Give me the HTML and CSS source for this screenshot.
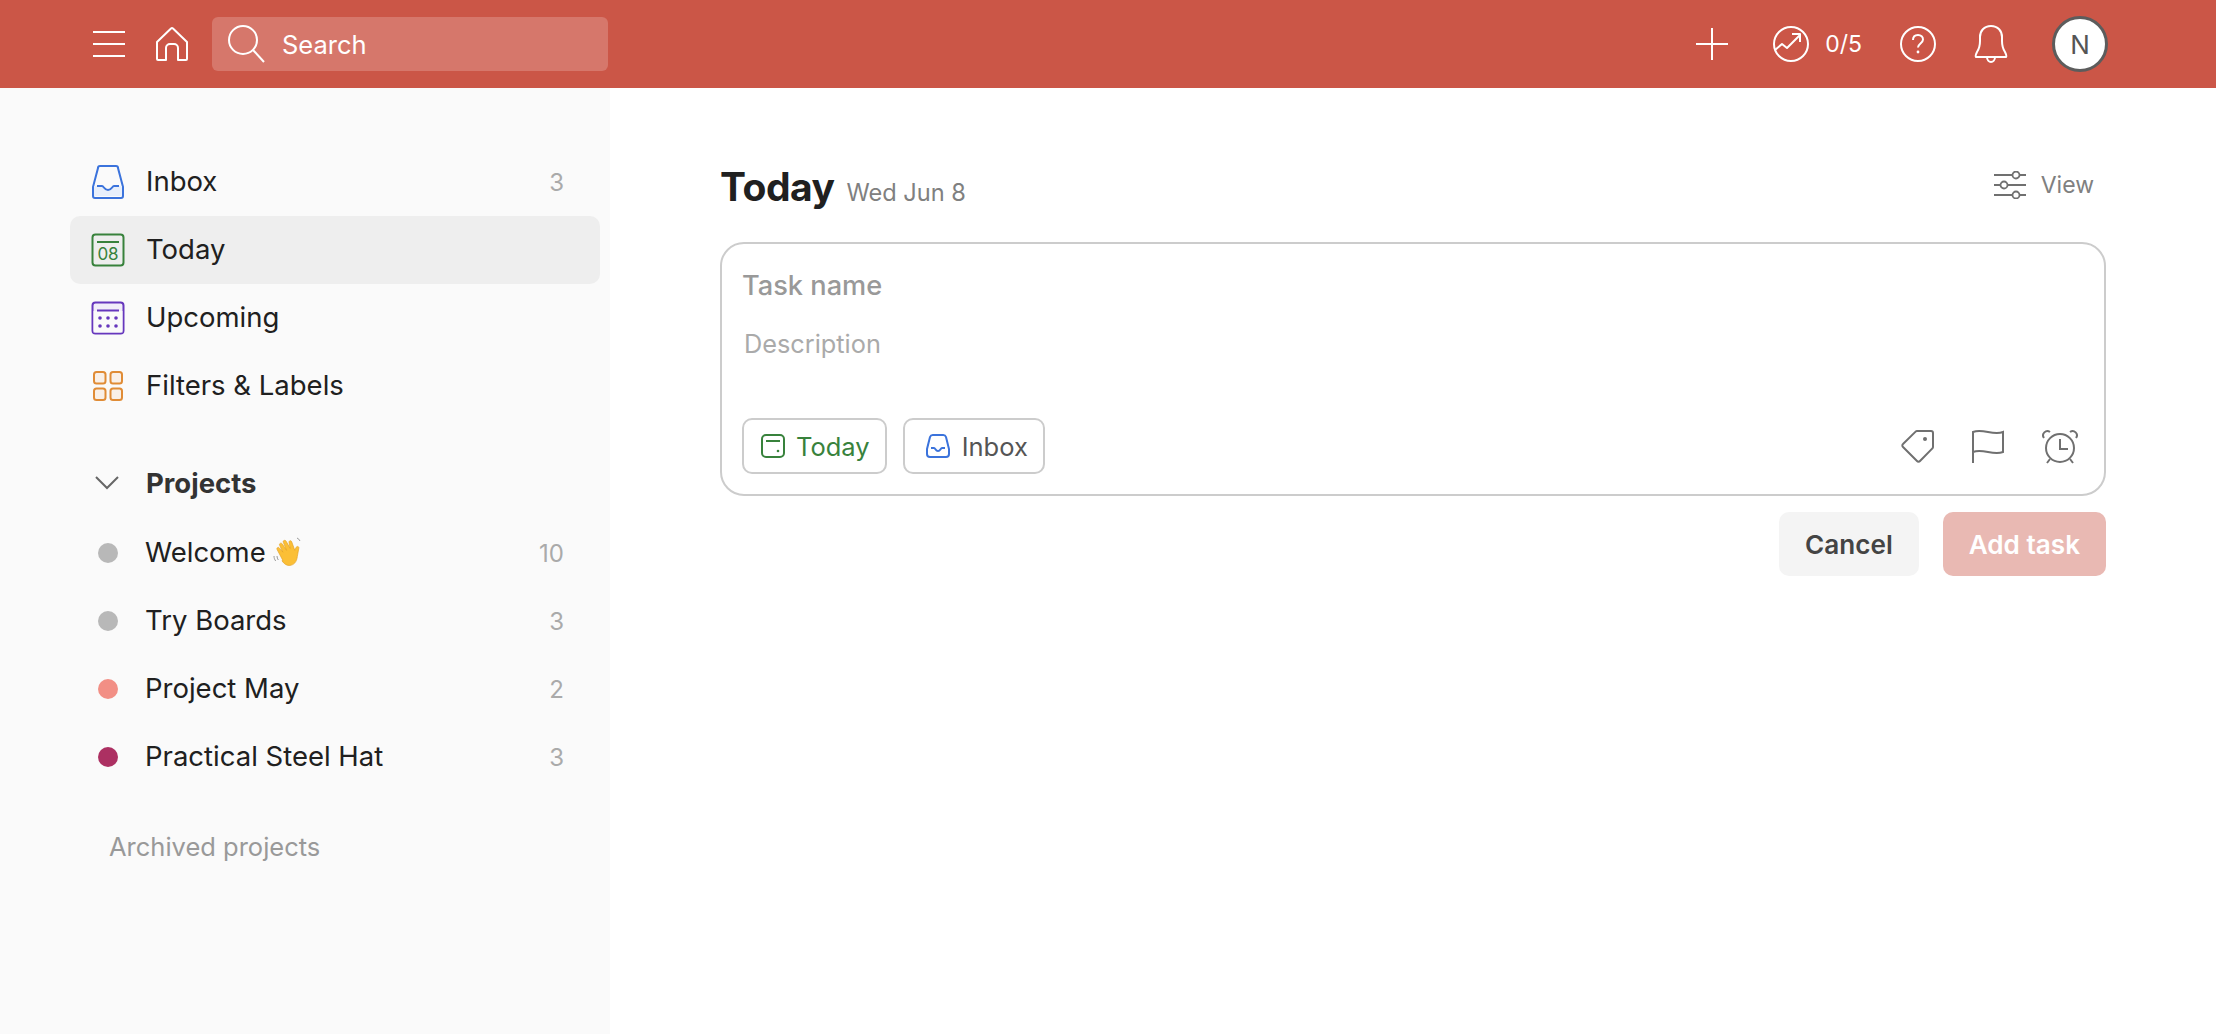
FILE: index.html
```html
<!DOCTYPE html>
<html lang="en">
<head>
  <meta charset="UTF-8">
  <title>Today: Todoist</title>
  <link rel="stylesheet" href="styles.css">
</head>
<body>
  <header class="topbar">
    <div class="topbar-left">
      <svg class="icon-menu" width="34" height="28" viewBox="0 0 34 28" fill="none" stroke="#fff" stroke-width="2"><path d="M1 2h32M1 14h32M1 26h32"/></svg>
      <svg class="icon-home" width="32" height="34" viewBox="0 0 32 34" fill="none" stroke="#fff" stroke-width="2" stroke-linejoin="round"><path d="M1 15 15 1.500a1.500 1.500 0 0 1 2 0L31 15v17a1 1 0 0 1-1 1h-8V21a4 4 0 0 0-4-4h-4a4 4 0 0 0-4 4v12H2a1 1 0 0 1-1-1z"/></svg>
      <div class="search">
        <svg width="38" height="38" viewBox="0 0 38 38" fill="none" stroke="#fff" stroke-width="2"><circle cx="16" cy="15" r="14"/><path d="m26 25 11 12"/></svg>
        <span>Search</span>
      </div>
    </div>
    <div class="topbar-right">
      <svg class="top-plus" width="32" height="32" viewBox="0 0 32 32" fill="none" stroke="#fff" stroke-width="2"><path d="M16 0v32M0 16h32"/></svg>
      <div class="karma">
        <svg width="36" height="36" viewBox="0 0 36 36" fill="none" stroke="#fff" stroke-width="2" stroke-linejoin="round"><circle cx="18" cy="18" r="17"/><path d="m2 24 7-6 5 4 13-13M19 8h8v8"/></svg>
        <span>0/5</span>
      </div>
      <svg class="top-help" width="36" height="36" viewBox="0 0 36 36" fill="none" stroke="#fff" stroke-width="2"><circle cx="18" cy="18" r="17"/><path d="M13 14c0-3 2-5 5-5s5 2 5 4.500c0 4-5 4-5 8"/><circle cx="18" cy="26" r="1.400" fill="#fff" stroke="none"/></svg>
      <svg class="top-bell" width="34" height="38" viewBox="0 0 34 38" fill="none" stroke="#fff" stroke-width="2" stroke-linejoin="round"><path d="M2 32c-1-1 0-3 1-5 2-3 3-5 3-11V12C6 6 10 1 17 1s11 5 11 11v4c0 6 1 8 3 11 1 2 2 4 1 5zM13 32c0 3 2 5 4 5s4-2 4-5"/></svg>
      <div class="avatar">N</div>
    </div>
  </header>

  <div class="layout">
    <aside class="sidebar">
      <nav class="nav">
        <a class="nav-item">
          <svg class="nav-icon" width="34" height="34" viewBox="0 0 34 34" fill="none"><path d="M2 22 7 3a2 2 0 0 1 2-2h16a2 2 0 0 1 2 2l5 19v9a2 2 0 0 1-2 2H4a2 2 0 0 1-2-2z" stroke="#3b73dc" stroke-width="2"/><path d="M3 21h8c2 0 2 4 6 4s4-4 6-4h8v10H3z" fill="#e8effb"/><path d="M6 21h5c2 0 2 4 6 4s4-4 6-4h5" stroke="#3b73dc" stroke-width="2"/></svg>
          <span class="nav-label">Inbox</span>
          <span class="count">3</span>
        </a>
        <a class="nav-item is-active">
          <svg class="nav-icon" width="34" height="34" viewBox="0 0 34 34" fill="none"><rect x="1.500" y="1.500" width="31" height="31" rx="3" stroke="#38823c" stroke-width="2"/><path d="M6 9h22" stroke="#38823c" stroke-width="2"/><text class="cal-num" x="17" y="27" text-anchor="middle">08</text></svg>
          <span class="nav-label">Today</span>
        </a>
        <a class="nav-item">
          <svg class="nav-icon" width="34" height="34" viewBox="0 0 34 34" fill="none"><rect x="1.500" y="1.500" width="31" height="31" rx="3" fill="#f1edf9" stroke="#6637bd" stroke-width="2"/><rect x="2.500" y="10" width="29" height="21.500" fill="#fafafa"/><path d="M6 9.500h22" stroke="#6637bd" stroke-width="2"/><g fill="#6637bd"><circle cx="9" cy="17" r="1.800"/><circle cx="17" cy="17" r="1.800"/><circle cx="25" cy="17" r="1.800"/><circle cx="9" cy="25" r="1.800"/><circle cx="17" cy="25" r="1.800"/><circle cx="25" cy="25" r="1.800"/></g></svg>
          <span class="nav-label">Upcoming</span>
        </a>
        <a class="nav-item">
          <svg class="nav-icon" width="34" height="34" viewBox="0 0 34 34" fill="#f9f0e8" stroke="#e08c36" stroke-width="2"><rect x="3" y="3" width="11.500" height="11.500" rx="2.500"/><rect x="19.500" y="3" width="11.500" height="11.500" rx="2.500"/><rect x="3" y="19.500" width="11.500" height="11.500" rx="2.500"/><rect x="19.500" y="19.500" width="11.500" height="11.500" rx="2.500"/></svg>
          <span class="nav-label">Filters &amp; Labels</span>
        </a>
      </nav>

      <div class="projects-head">
        <svg class="chevron" width="24" height="14" viewBox="0 0 24 14" fill="none" stroke="#666" stroke-width="2"><path d="m1 1 11 11L23 1"/></svg>
        <span>Projects</span>
      </div>

      <ul class="projects">
        <li class="nav-item">
          <i class="dot dot-grey"></i>
          <span class="nav-label">Welcome
            <svg class="wave" width="30" height="30" viewBox="0 0 30 30" role="img" aria-label="waving hand"><g transform="rotate(-14 15 15)"><path d="M8 22 5 10c-.4-2 2-2.600 2.700-.8L10 14 8.500 6.500c-.4-2 2.300-2.600 2.900-.7L14 13l-1.200-8.500c-.3-2 2.500-2.300 3-.4L18 12l.3-6c.1-2 2.800-1.800 2.800.2L22 15l2-2.500c1.200-1.500 3.300-.2 2.400 1.500l-3.400 7.500c-2 5.500-5.500 7.500-9.500 7-3-.4-5.200-2.800-6.500-6.500z" fill="#fbbf36" stroke="#e29f22" stroke-width=".6"/></g><path d="M1 19c0 2 .6 3.500 1.700 5M4 19c0 1.500.5 2.800 1.300 4M24 1c1.400.6 2.400 1.600 3 3" fill="none" stroke="#9a9a9a" stroke-width="1"/></svg>
          </span>
          <span class="count">10</span>
        </li>
        <li class="nav-item">
          <i class="dot dot-grey"></i>
          <span class="nav-label">Try Boards</span>
          <span class="count">3</span>
        </li>
        <li class="nav-item">
          <i class="dot dot-salmon"></i>
          <span class="nav-label">Project May</span>
          <span class="count">2</span>
        </li>
        <li class="nav-item">
          <i class="dot dot-berry"></i>
          <span class="nav-label">Practical Steel Hat</span>
          <span class="count">3</span>
        </li>
      </ul>

      <div class="archived">Archived projects</div>
    </aside>

    <main class="content">
      <div class="view-head">
        <div class="view-title">
          <h1>Today</h1>
          <small>Wed Jun 8</small>
        </div>
        <div class="view-btn">
          <svg width="32" height="28" viewBox="0 0 32 28" fill="none" stroke="#707070" stroke-width="1.800"><path d="M0 4h18M26 4h6M0 14h6M14 14h18M0 24h18M26 24h6"/><circle cx="22" cy="4" r="3.500"/><circle cx="10" cy="14" r="3.500"/><circle cx="22" cy="24" r="3.500"/></svg>
          <span>View</span>
        </div>
      </div>

      <form class="editor">
        <div class="task-name">Task name</div>
        <div class="task-desc">Description</div>
        <div class="editor-foot">
          <div class="chips">
            <div class="chip chip-today">
              <svg width="26" height="26" viewBox="0 0 26 26" fill="none" stroke="#38823c" stroke-width="2"><rect x="2" y="2" width="22" height="22" rx="4"/><path d="M6 8h14"/><circle cx="18" cy="18" r="1.300" fill="#38823c" stroke="none"/></svg>
              <span>Today</span>
            </div>
            <div class="chip chip-inbox">
              <svg width="26" height="26" viewBox="0 0 26 26" fill="none" stroke="#3b73dc" stroke-width="2"><path d="M2 16 5 4a3 3 0 0 1 3-2h10a3 3 0 0 1 3 2l3 12v5a3 3 0 0 1-3 3H5a3 3 0 0 1-3-3z"/><path d="M6 15h3c1.500 0 1.500 3 4 3s2.500-3 4-3h3"/></svg>
              <span>Inbox</span>
            </div>
          </div>
          <div class="tools">
            <svg width="34" height="34" viewBox="0 0 34 34" fill="none" stroke="#707070" stroke-width="2" stroke-linejoin="round"><path d="M16 2h14a2 2 0 0 1 2 2v14a2 2 0 0 1-.6 1.400L19 32a2 2 0 0 1-3 0L2 18a2 2 0 0 1 0-3L14.600 2.600A2 2 0 0 1 16 2z"/><circle cx="24" cy="10" r="2" fill="#707070" stroke="none"/></svg>
            <svg width="34" height="34" viewBox="0 0 34 34" fill="none" stroke="#707070" stroke-width="2"><path d="M2 34V3c10-4 20 4 30 0v20c-10 4-20-4-30 0"/></svg>
            <svg width="38" height="36" viewBox="0 0 38 36" fill="none" stroke="#707070" stroke-width="2"><circle cx="19" cy="20" r="14"/><path d="M19 11v10h8M3 10c-3-4 2-9 6-6M35 10c3-4-2-9-6-6M9 31l-3 4M29 31l3 4"/></svg>
          </div>
        </div>
      </form>

      <div class="actions">
        <button class="btn btn-cancel" type="button">Cancel</button>
        <button class="btn btn-add" type="button">Add task</button>
      </div>
    </main>
  </div>
</body>
</html>
```

FILE: styles.css
```css
* {
  box-sizing: border-box;
}

html, body {
  margin: 0;
  height: 100%;
}

body {
  display: flex;
  flex-direction: column;
  overflow: hidden;
  font-family: Inter, "Liberation Sans", sans-serif;
  color: #202020;
}

svg {
  display: block;
  flex-shrink: 0;
}

.topbar {
  display: flex;
  align-items: center;
  justify-content: space-between;
  height: 88px;
  flex-shrink: 0;
  padding: 0 108px 0 92px;
  background: #cb5647;
  color: #fff;
}

.topbar-left,
.topbar-right {
  display: flex;
  align-items: center;
}

.icon-menu {
  margin-right: 30px;
}

.icon-home {
  margin-right: 24px;
}

.search {
  display: flex;
  align-items: center;
  gap: 17px;
  width: 396px;
  height: 54px;
  padding-left: 15px;
  border-radius: 6px;
  background: #d6776b;
  font-size: 25.5px;
}

.top-plus {
  margin-right: 45px;
}

.karma {
  display: flex;
  align-items: center;
  gap: 16px;
  margin-right: 38px;
  font-size: 23px;
}

.top-help {
  margin-right: 38px;
}

.top-bell {
  margin-right: 44px;
}

.avatar {
  display: flex;
  align-items: center;
  justify-content: center;
  width: 56px;
  height: 56px;
  border: 3px solid #5c5c5c;
  border-radius: 50%;
  background: #fff;
  color: #555;
  font-size: 26px;
}

.layout {
  display: flex;
  flex: 1;
  min-height: 0;
}

.sidebar {
  width: 610px;
  flex-shrink: 0;
  padding: 60px 10px 0 70px;
  background: #fafafa;
}

.nav-item {
  display: flex;
  align-items: center;
  height: 68px;
  padding: 0 36px 0 21px;
  border-radius: 10px;
}

.nav-item.is-active {
  background: #eee;
}

.nav-icon {
  margin-right: 21px;
}

.nav-label {
  display: flex;
  align-items: center;
  gap: 7px;
  flex: 1;
  padding-bottom: 2px;
  font-size: 27.5px;
}

.cal-num {
  font-family: Inter, sans-serif;
  font-size: 17px;
  fill: #38823c;
}

.count {
  color: #aaa;
  font-size: 24px;
}

.projects-head {
  display: flex;
  align-items: center;
  height: 68px;
  margin-top: 29px;
  padding-left: 25px;
  font-size: 27.5px;
  font-weight: 700;
  color: #333;
}

.chevron {
  margin-right: 27px;
}

.projects {
  margin: 2px 0 0;
  padding: 0;
  list-style: none;
}

.dot {
  display: block;
  width: 20px;
  height: 20px;
  margin: 0 27px 0 7px;
  border-radius: 50%;
}

.dot-grey {
  background: #b8b8b8;
}

.dot-salmon {
  background: #f28f85;
}

.dot-berry {
  background: #ac3062;
}

.archived {
  margin-top: 40px;
  padding-left: 39px;
  font-size: 25.5px;
  color: #999;
}

.content {
  flex: 1;
  min-width: 0;
  padding: 0 110px;
}

.view-head {
  display: flex;
  align-items: center;
  justify-content: space-between;
  height: 154px;
  padding-top: 42px;
  padding-right: 12px;
}

.view-title {
  display: flex;
  align-items: baseline;
  gap: 12px;
}

.view-title h1 {
  margin: 0;
  font-size: 39px;
  font-weight: 700;
  letter-spacing: -0.5px;
}

.view-title small {
  font-size: 23.6px;
  color: #808080;
}

.view-btn {
  display: flex;
  align-items: center;
  gap: 15px;
  margin-bottom: 3px;
  font-size: 23px;
  color: #808080;
}

.editor {
  display: flex;
  flex-direction: column;
  height: 254px;
  padding: 25px 20px 20px 20px;
  border: 2px solid #ccc;
  border-radius: 24px;
}

.task-name {
  font-size: 27.2px;
  font-weight: 500;
  color: #999;
}

.task-desc {
  margin-top: 26px;
  margin-left: 2px;
  font-size: 25.3px;
  color: #aaa;
}

.editor-foot {
  display: flex;
  align-items: center;
  justify-content: space-between;
  margin-top: auto;
}

.chips {
  display: flex;
  gap: 16px;
}

.chip {
  display: flex;
  align-items: center;
  gap: 10px;
  height: 56px;
  padding: 0 15px 0 16px;
  border: 2px solid #ccc;
  border-radius: 10px;
  font-size: 25.5px;
  color: #555;
}

.chip-today {
  color: #38823c;
}

.chip-inbox {
  padding: 0 15px 0 20px;
  gap: 11px;
}

.tools {
  display: flex;
  align-items: center;
  gap: 36px;
  padding-right: 5px;
}

.actions {
  display: flex;
  justify-content: flex-end;
  gap: 24px;
  margin-top: 16px;
}

.btn {
  height: 64px;
  padding: 0 26px;
  border: 0;
  border-radius: 10px;
  font-family: inherit;
  font-size: 26.1px;
  font-weight: 600;
}

.btn-cancel {
  background: #f4f4f4;
  color: #444;
}

.btn-add {
  background: #e9b9b3;
  color: #fff;
}
```
